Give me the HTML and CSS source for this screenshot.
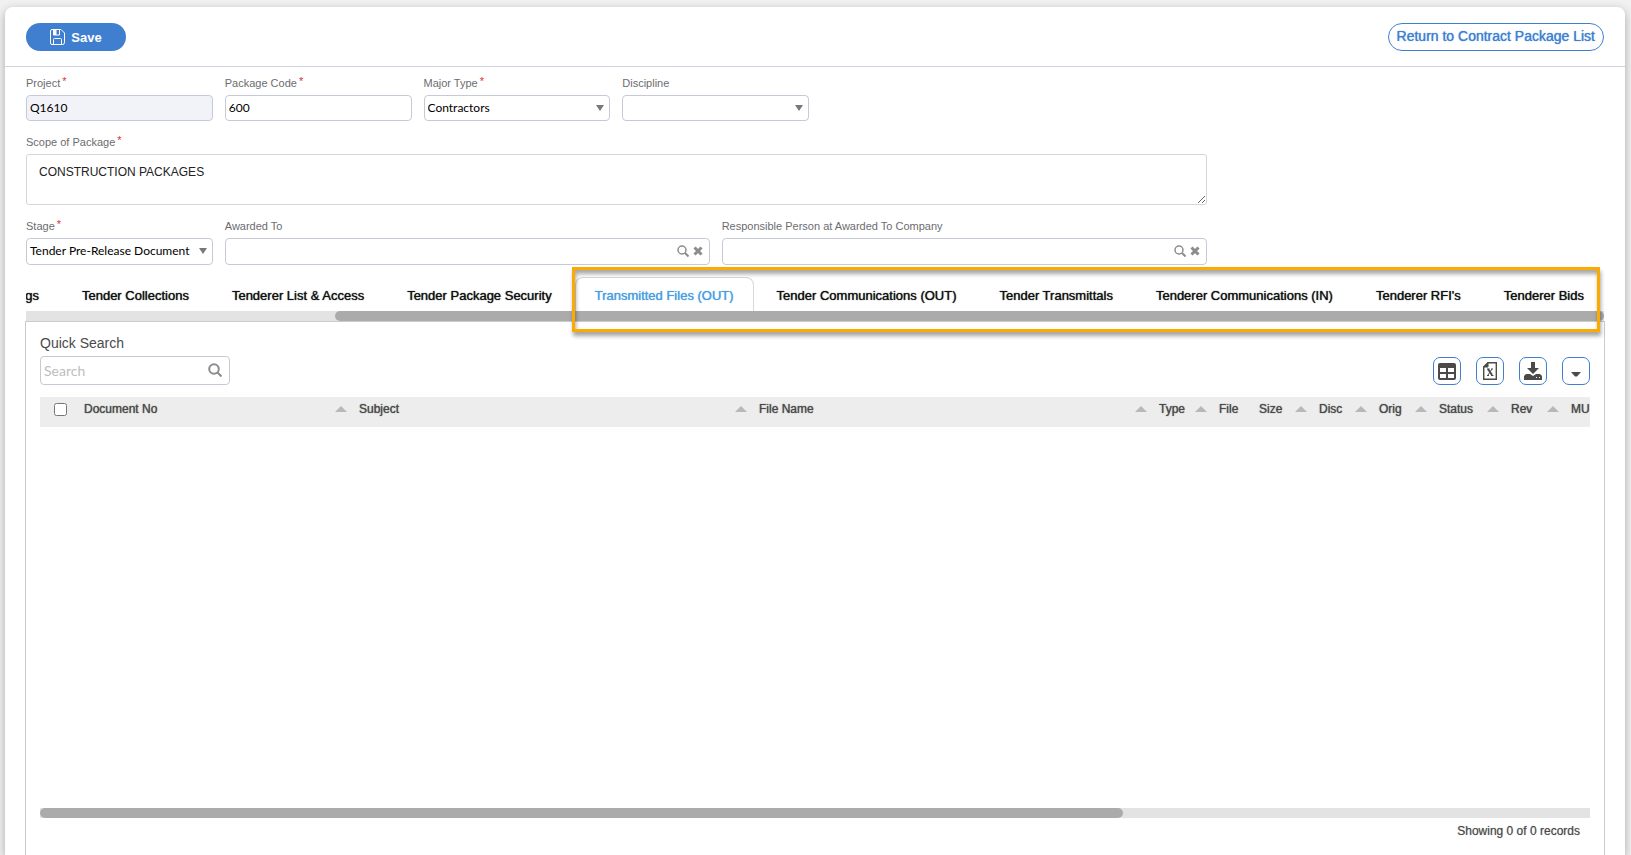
FILE: index.html
```html
<!DOCTYPE html>
<html lang="en">
<head>
<meta charset="UTF-8">
<meta name="viewport" content="width=device-width, initial-scale=1.0">
<title>Contract Package</title>
<link rel="stylesheet" href="styles.css">
</head>
<body>
<main class="card">
  <header class="card-header">
    <button type="button" class="btn-save">
      <svg width="15" height="16" viewBox="0 0 15 16" fill="none" stroke="currentColor">
        <path d="M2 .5h9l3.500 3.500v9.500a2 2 0 0 1-2 2h-10.500a1.500 1.500 0 0 1-1.500-1.500v-12a1.500 1.500 0 0 1 1.500-1.500z"/>
        <path d="M3.500.5v5.500h6v-5.500M3.500 15.500v-5a1 1 0 0 1 1-1h6a1 1 0 0 1 1 1v5"/>
        <path d="M3.500 1h3v5h-3z" fill="currentColor" stroke="none"/>
      </svg>
      Save
    </button>
    <a href="#" class="btn-return">Return to Contract Package List</a>
  </header>

  <!-- Package details -->
  <form class="details">
    <div class="row">
      <div class="field">
        <label for="project">Project<span class="required">*</span></label>
        <input type="text" id="project" class="control" value="Q1610" readonly>
      </div>
      <div class="field">
        <label for="package-code">Package Code<span class="required">*</span></label>
        <input type="text" id="package-code" class="control" value="600">
      </div>
      <div class="field">
        <label for="major-type">Major Type<span class="required">*</span></label>
        <div class="select">
          <select id="major-type" class="control"><option>Contractors</option></select>
        </div>
      </div>
      <div class="field">
        <label for="discipline">Discipline</label>
        <div class="select">
          <select id="discipline" class="control"><option></option></select>
        </div>
      </div>
    </div>
    <div class="row">
      <div class="field field-full">
        <label for="scope">Scope of Package<span class="required">*</span></label>
        <textarea id="scope" class="scope">CONSTRUCTION PACKAGES</textarea>
      </div>
    </div>
    <div class="row">
      <div class="field">
        <label for="stage">Stage<span class="required">*</span></label>
        <div class="select">
          <select id="stage" class="control control-tall"><option>Tender Pre-Release Document</option></select>
        </div>
      </div>
      <div class="field field-wide">
        <label for="awarded-to">Awarded To</label>
        <div class="lookup">
          <input type="text" id="awarded-to">
          <button type="button" aria-label="Find company">
            <svg width="12" height="12" viewBox="0 0 12 12" fill="none" stroke="currentColor"><circle cx="5" cy="5" r="4" stroke-width="1.500"/><path d="M8 8l3.500 3.500" stroke-width="2"/></svg>
          </button>
          <button type="button" aria-label="Clear company">
            <svg width="10" height="10" viewBox="0 0 10 10" stroke="currentColor" stroke-width="3"><path d="M1.500 1.500l7 7M8.500 1.500l-7 7"/></svg>
          </button>
        </div>
      </div>
      <div class="field field-wide">
        <label for="responsible">Responsible Person at Awarded To Company</label>
        <div class="lookup">
          <input type="text" id="responsible">
          <button type="button" aria-label="Find person">
            <svg width="12" height="12" viewBox="0 0 12 12" fill="none" stroke="currentColor"><circle cx="5" cy="5" r="4" stroke-width="1.500"/><path d="M8 8l3.500 3.500" stroke-width="2"/></svg>
          </button>
          <button type="button" aria-label="Clear person">
            <svg width="10" height="10" viewBox="0 0 10 10" stroke="currentColor" stroke-width="3"><path d="M1.500 1.500l7 7M8.500 1.500l-7 7"/></svg>
          </button>
        </div>
      </div>
    </div>
  </form>

  <!-- Tabs -->
  <div class="tab-area">
    <nav class="tabs">
      <a href="#">Drawings</a>
      <a href="#">Tender Collections</a>
      <a href="#">Tenderer List &amp; Access</a>
      <a href="#">Tender Package Security</a>
      <a href="#" class="active">Transmitted Files (OUT)</a>
      <a href="#">Tender Communications (OUT)</a>
      <a href="#">Tender Transmittals</a>
      <a href="#">Tenderer Communications (IN)</a>
      <a href="#">Tenderer RFI's</a>
      <a href="#">Tenderer Bids</a>
    </nav>
    <div class="scrollbar scrollbar-tabs"><div class="thumb"></div></div>
    <div class="callout"></div>
  </div>

  <section class="panel">
    <div class="toolbar">
      <div class="search">
        <label for="quick-search">Quick Search</label>
        <div class="search-box">
          <input type="text" id="quick-search" placeholder="Search">
          <svg width="14" height="14" viewBox="0 0 14 14" fill="none" stroke="currentColor" stroke-width="2"><circle cx="6" cy="6" r="4.800"/><path d="M9.500 9.500l4 4"/></svg>
        </div>
      </div>
      <div class="actions">
        <button type="button" aria-label="Columns">
          <svg width="18" height="17" viewBox="0 0 18 17" fill="currentColor"><path fill-rule="evenodd" d="M2 0h14a2 2 0 0 1 2 2v13a2 2 0 0 1-2 2h-14a2 2 0 0 1-2-2v-13a2 2 0 0 1 2-2zM2 5v4h6v-4zM10 5v4h6v-4zM2 11v4h6v-4zM10 11v4h6v-4z"/></svg>
        </button>
        <button type="button" aria-label="Export to Excel">
          <svg width="14" height="18" viewBox="0 0 14 18" fill="none" stroke="currentColor"><path d="M5 .7h8.300v16.600h-12.600v-12.300z" stroke-width="1.400"/><path d="M5 .5v4.500h-4.500z" fill="currentColor"/><path d="M5 7l4 6" stroke-width="2"/><path d="M9 7l-4 6M4 7h2.500M8 7h2M4 13.500h2M8 13.500h2.500"/></svg>
        </button>
        <button type="button" aria-label="Download">
          <svg width="18" height="18" viewBox="0 0 18 18" fill="currentColor"><path d="M7 0h4v6h4l-6 6-6-6h4z"/><path fill-rule="evenodd" d="M2 12h4l3 2 3-2h4l2 2v4h-18v-4zM12 15v1h1v-1zM15 15v1h1v-1z"/></svg>
        </button>
        <button type="button" aria-label="More">
          <svg width="10" height="5" viewBox="0 0 10 5" fill="currentColor" class="caret"><path d="M0 0h10l-4 4.500h-2z"/></svg>
        </button>
      </div>
    </div>

    <div class="grid">
      <table>
        <colgroup>
          <col class="c-check"><col class="c-doc"><col class="c-long"><col class="c-long"><col class="c-short"><col class="c-file"><col class="c-short"><col class="c-short"><col class="c-short"><col class="c-status"><col class="c-short"><col class="c-short">
        </colgroup>
        <thead>
          <tr>
            <th class="check"><input type="checkbox" aria-label="Select all"></th>
            <th class="sort">Document No</th>
            <th class="sort">Subject</th>
            <th class="sort">File Name</th>
            <th class="sort">Type</th>
            <th>File</th>
            <th class="sort">Size</th>
            <th class="sort">Disc</th>
            <th class="sort">Orig</th>
            <th class="sort">Status</th>
            <th class="sort">Rev</th>
            <th>MU</th>
          </tr>
        </thead>
        <tbody></tbody>
      </table>
    </div>
    <div class="scrollbar scrollbar-grid"><div class="thumb"></div></div>
    <p class="records">Showing 0 of 0 records</p>
  </section>
</main>
</body>
</html>
```
FILE: styles.css
```css
* {
  box-sizing: border-box;
}
body {
  margin: 0;
  padding: 7px 6px 0 5px;
  background-color: #f1f1f1;
  font-family: "Liberation Sans", Arial, sans-serif;
  font-size: 12px;
  color: #4a4a4a;
}
button, input, select, textarea {
  font-family: inherit;
  margin: 0;
}
.card {
  display: flex;
  flex-direction: column;
  min-height: calc(100vh - 7px);
  background-color: #fff;
  border-radius: 8px 8px 0 0;
  box-shadow: 0 3px 10px rgba(0, 0, 0, 0.3);
}
.card-header {
  display: flex;
  justify-content: space-between;
  align-items: center;
  padding: 16px 21px 15px;
  border-bottom: 1px solid #d0d1dc;
}
.btn-save {
  display: flex;
  align-items: center;
  justify-content: center;
  gap: 6px;
  width: 100px;
  height: 28px;
  padding: 0;
  border: 0;
  border-radius: 14px;
  background-color: #407fd0;
  color: #fff;
  font-size: 13px;
  font-weight: bold;
}
.btn-return {
  height: 28px;
  padding: 0 8px;
  border: 1px solid #407fd0;
  border-radius: 14px;
  color: #407fd0;
  font-size: 14px;
  line-height: 25px;
  text-decoration: none;
  text-shadow: 0 0 1px #407fd0;
}

/* form */
.details {
  display: flex;
  flex-direction: column;
  gap: 13px;
  padding: 8px 21px 12px;
}
.row {
  display: flex;
  margin: 0 -6px;
}
.field {
  width: 12.5%;
  padding: 0 6px;
}
.field-wide {
  width: 31.25%;
}
.field-full {
  width: 75%;
}
.field label {
  display: block;
  height: 16px;
  margin-bottom: 4px;
  font-size: 11px;
  line-height: 16px;
  color: #6c6c70;
  white-space: nowrap;
}
.required {
  margin-left: 2px;
  color: #e0303c;
  vertical-align: 2px;
  line-height: 1;
}
.control {
  display: block;
  width: 100%;
  height: 26px;
  padding: 0 3px 2px;
  border: 1px solid #c6c9d6;
  border-radius: 4px;
  background-color: #fff;
  color: #000;
  font-family: Lato, sans-serif;
  font-size: 12px;
  appearance: none;
}
.control[readonly] {
  background-color: #f2f3f8;
}
.control-tall {
  height: 27px;
}
.select {
  position: relative;
}
.select::after {
  content: "";
  position: absolute;
  top: 10px;
  right: 6px;
  border: 4px solid transparent;
  border-top: 6px solid #77777c;
  border-bottom: 0;
  pointer-events: none;
}
.scope {
  display: block;
  width: 100%;
  height: 51px;
  padding: 10px 12px;
  border: 1px solid #d6d6d9;
  border-radius: 3px;
  color: #222;
  font-size: 12px;
  line-height: 14px;
  resize: vertical;
}
.lookup {
  display: flex;
  align-items: center;
  gap: 4px;
  height: 27px;
  padding: 0 6px 2px 3px;
  border: 1px solid #c6c9d6;
  border-radius: 4px;
}
.lookup input {
  flex: 1;
  min-width: 0;
  border: 0;
}
.lookup button {
  display: flex;
  padding: 0;
  border: 0;
  background: none;
  color: #8c8c8c;
}

/* tabs */
.tab-area {
  position: relative;
  margin: 0 21px;
}
.tabs {
  display: flex;
  justify-content: flex-end;
  gap: 3px;
  overflow: hidden;
}
.tabs a {
  flex-shrink: 0;
  height: 34px;
  padding: 0 19px;
  border: 1px solid transparent;
  border-bottom: 0;
  border-radius: 8px 8px 0 0;
  color: #111;
  font-size: 13px;
  line-height: 36px;
  text-decoration: none;
  text-shadow: 0 0 1px currentColor;
  white-space: nowrap;
}
.tabs a.active {
  border-color: #d8d8d8;
  color: #4a9ddf;
}
.callout {
  position: absolute;
  top: -10px;
  right: 4px;
  width: 1028px;
  height: 65px;
  border: 3px solid #fbab00;
  box-shadow: 1px 4px 4px rgba(0, 0, 0, 0.35), inset 1px 4px 4px rgba(0, 0, 0, 0.35);
  pointer-events: none;
}
.scrollbar {
  height: 10px;
  background-color: #e3e3e3;
}
.thumb {
  height: 10px;
  border-radius: 5px;
  background-color: #ababab;
}
.scrollbar-tabs .thumb {
  width: 80.4%;
  margin-left: auto;
}
.scrollbar-grid .thumb {
  width: 69.9%;
}

/* grid panel */
.panel {
  flex: 1;
  display: flex;
  flex-direction: column;
  margin: 0 20px;
  padding: 13px 14px 0;
  border: 1px solid #ccc;
  border-bottom: 0;
}
.toolbar {
  display: flex;
  justify-content: space-between;
  align-items: flex-end;
  margin-bottom: 12px;
}
.search label {
  display: block;
  margin-bottom: 5px;
  font-size: 14px;
  line-height: 16px;
}
.search-box {
  display: flex;
  align-items: center;
  width: 190px;
  height: 29px;
  padding: 0 7px 0 3px;
  border: 1px solid #c6c9d6;
  border-radius: 4px;
  color: #8c8c8c;
}
.search-box input {
  flex: 1;
  min-width: 0;
  padding: 0;
  border: 0;
  font-family: Lato, sans-serif;
  font-size: 14px;
}
.search-box svg {
  margin-bottom: 2px;
}
.search-box input::placeholder {
  color: #bdbdbd;
}
.actions {
  display: flex;
  gap: 15px;
}
.actions button {
  display: flex;
  align-items: center;
  justify-content: center;
  width: 28px;
  height: 28px;
  padding: 0;
  border: 1px solid #407fd0;
  border-radius: 7px;
  background-color: #fff;
  color: #4a4a4a;
}
.caret {
  margin-top: 6px;
}
.grid {
  flex: 1;
  overflow: hidden;
}
table {
  width: 100%;
  table-layout: fixed;
  border-collapse: collapse;
}
thead tr {
  background-color: #ededed;
}
th {
  height: 30px;
  padding: 0 4px 6px;
  overflow: hidden;
  font-weight: normal;
  text-align: left;
  text-shadow: 0 0 1px #4a4a4a;
  white-space: nowrap;
}
th.check {
  padding-left: 14px;
}
.check input {
  display: block;
  width: 13px;
  height: 13px;
}
th.sort::after {
  content: "";
  float: right;
  margin: 4px 4px 0 0;
  border: 6px solid transparent;
  border-top: 0;
  border-bottom-color: #b8b8b8;
}
.c-check { width: 40px; }
.c-doc { width: 275px; }
.c-long { width: 400px; }
.c-short { width: 60px; }
.c-file { width: 40px; }
.c-status { width: 72px; }
.records {
  margin: 0;
  padding: 6px 10px 17px;
  line-height: 14px;
  text-align: right;
  text-shadow: 0 0 1px #9a9a9a;
}
```
